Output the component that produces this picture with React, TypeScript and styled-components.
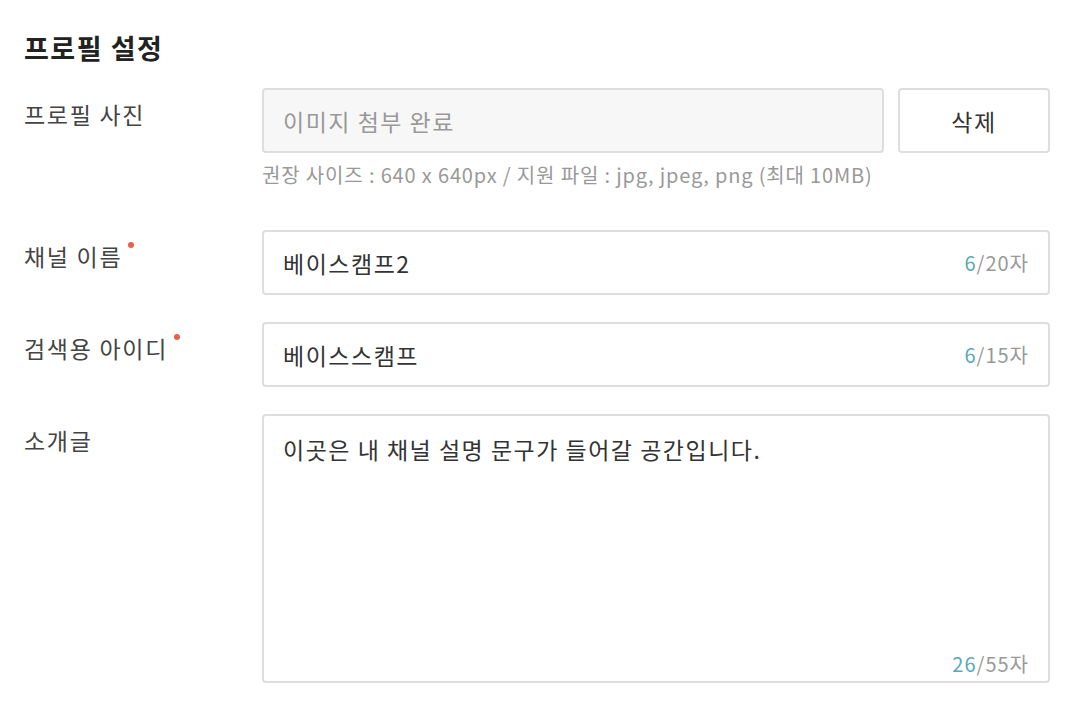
import React from "react";
import styled, { createGlobalStyle } from "styled-components";

const Global = createGlobalStyle`
  html, body { margin: 0; padding: 0; background: #fff; }
  body { font-family: "Noto Sans CJK KR", "Noto Sans", sans-serif; color: #333; }
  * { box-sizing: border-box; }
`;

const Page = styled.div`
  padding: 28px 16px 0 24px;
  width: 1066px;
`;

const Title = styled.h1`
  margin: 0 0 20px;
  font-size: 27px;
  font-weight: 700;
  letter-spacing: 1.5px;
  line-height: 40px;
  color: #222;
`;

const Row = styled.div<{ $gap?: number }>`
  display: grid;
  grid-template-columns: 238px 1fr;
  margin-bottom: ${(p) => p.$gap ?? 27}px;
`;

const Label = styled.div`
  font-size: 23px;
  letter-spacing: 1.7px;
  line-height: 32px;
  color: #444;
  padding-top: 10px;
  display: flex;
  align-items: flex-start;
`;

const Required = styled.span`
  display: inline-block;
  width: 6px;
  height: 6px;
  border-radius: 50%;
  background: #ec5f4a;
  margin-left: 6px;
  margin-top: 2px;
`;

const Field = styled.div`
  display: flex;
  flex-direction: column;
`;

const FileLine = styled.div`
  display: flex;
  gap: 14px;
`;

const Box = styled.div<{ $filled?: boolean; $height: number }>`
  flex: 1;
  height: ${(p) => p.$height}px;
  border: 2px solid #dedede;
  border-radius: 4px;
  background: ${(p) => (p.$filled ? "#f7f7f7" : "#fff")};
  display: flex;
  justify-content: space-between;
  padding: 0 19px;
  font-size: 23px;
  letter-spacing: 1.5px;
  line-height: 32px;
  color: #333;
`;

const InputBox = styled(Box)`
  align-items: center;
`;

const AreaBox = styled(Box)`
  flex-direction: column;
  padding-top: 17px;
  padding-bottom: 1px;
`;

const Placeholder = styled.span`
  color: #999;
`;

const Button = styled.button`
  width: 152px;
  height: 65px;
  border: 2px solid #dedede;
  border-radius: 4px;
  background: #fff;
  font-family: inherit;
  font-size: 23px;
  letter-spacing: 1.5px;
  color: #333;
  cursor: pointer;
`;

const Help = styled.div`
  margin-top: 9px;
  font-size: 20px;
  line-height: 26px;
  letter-spacing: 0.85px;
  color: #999;
`;

const Counter = styled.span`
  font-size: 20px;
  letter-spacing: 1px;
  color: #999;
`;

const AreaCounter = styled(Counter)`
  align-self: flex-end;
`;

const Count = styled.span`
  color: #5aa9b8;
`;

export default function App() {
  return (
    <Page>
      <Global />
      <Title>프로필 설정</Title>

      <Row $gap={42}>
        <Label>프로필 사진</Label>
        <Field>
          <FileLine>
            <InputBox $filled $height={65}>
              <Placeholder>이미지 첨부 완료</Placeholder>
            </InputBox>
            <Button>삭제</Button>
          </FileLine>
          <Help>권장 사이즈 : 640 x 640px / 지원 파일 : jpg, jpeg, png (최대 10MB)</Help>
        </Field>
      </Row>

      <Row>
        <Label>
          채널 이름<Required />
        </Label>
        <InputBox $height={65}>
          <span>베이스캠프2</span>
          <Counter>
            <Count>6</Count>/20자
          </Counter>
        </InputBox>
      </Row>

      <Row>
        <Label>
          검색용 아이디<Required />
        </Label>
        <InputBox $height={65}>
          <span>베이스스캠프</span>
          <Counter>
            <Count>6</Count>/15자
          </Counter>
        </InputBox>
      </Row>

      <Row>
        <Label>소개글</Label>
        <AreaBox $height={269}>
          <span>이곳은 내 채널 설명 문구가 들어갈 공간입니다.</span>
          <AreaCounter>
            <Count>26</Count>/55자
          </AreaCounter>
        </AreaBox>
      </Row>
    </Page>
  );
}
